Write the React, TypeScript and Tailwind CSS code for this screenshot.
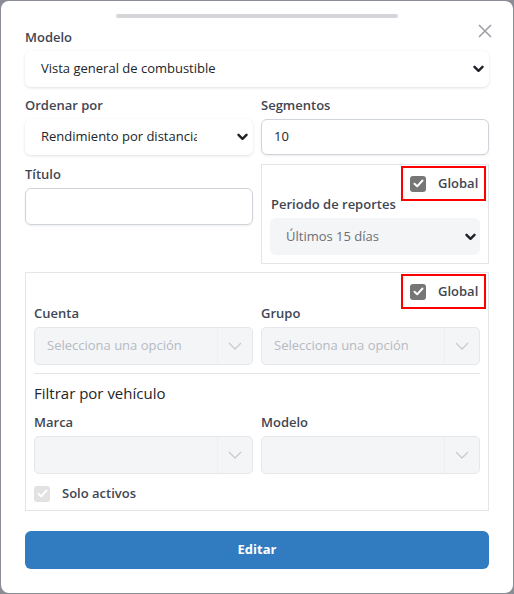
import React from 'react';

const font = { fontFamily: '"Open Sans", "Noto Sans", sans-serif' };

const BoldChevron = () => (
  <svg width="11" height="8" viewBox="0 0 11 8" className="shrink-0">
    <polyline points="1.5,1.8 5.5,5.8 9.5,1.8" fill="none" stroke="#1f2328" strokeWidth="2.4" strokeLinecap="round" strokeLinejoin="round" />
  </svg>
);

const ThinChevron = () => (
  <svg width="14" height="8" viewBox="0 0 14 8">
    <polyline points="1,1 7,7 13,1" fill="none" stroke="#c9cbd0" strokeWidth="1.3" />
  </svg>
);

const Check = ({ bg }: { bg: string }) => (
  <span className={`flex h-4 w-4 items-center justify-center rounded-[3px] ${bg}`}>
    <svg width="11" height="9" viewBox="0 0 11 9">
      <polyline points="1.5,4.8 4.2,7.3 9.5,1.5" fill="none" stroke="#fff" strokeWidth="2" strokeLinecap="round" strokeLinejoin="round" />
    </svg>
  </span>
);

const GlobalToggle = () => (
  <div className="flex justify-end">
    <div className="mr-[-6px] mt-[1px] flex h-[35px] w-[85px] items-center gap-3 border-2 border-[#ff0000] pl-[7px]">
      <Check bg="bg-[#767676]" />
      <span className="text-[13px] font-semibold text-[#3f4653]">Global</span>
    </div>
  </div>
);

const Label = ({ children }: { children: React.ReactNode }) => (
  <div className="mb-1 h-5 text-[13px] font-semibold leading-5 text-[#3f4653]">{children}</div>
);

const DisabledSelect = ({ placeholder }: { placeholder?: string }) => (
  <div className="flex h-[38px] items-stretch rounded-[5px] border border-[#e6e7ea] bg-[#f4f5f7]">
    <div className="flex flex-1 items-center pl-3 text-[13px] text-[#b6bac2]">{placeholder}</div>
    <div className="flex w-[35px] items-center justify-center border-l border-[#efeff2]">
      <ThinChevron />
    </div>
  </div>
);

export default function App() {
  return (
    <div className="h-[594px] w-[514px] bg-[#8a8d95] p-px" style={font}>
      <div className="relative h-[592px] w-[512px] rounded-lg bg-white px-6">
        {/* drag handle */}
        <div className="mx-auto h-[14px] pt-[13px]">
          <div className="mx-auto h-[4px] w-[282px] rounded-full bg-[#d4d6da]" />
        </div>
        <button className="absolute right-[20px] top-[22px] text-[#9ca0a6]">
          <svg width="16" height="16" viewBox="0 0 16 16">
            <path d="M2 2 L14 14 M14 2 L2 14" stroke="currentColor" strokeWidth="1.6" />
          </svg>
        </button>

        <div className="mt-[12px]">
          <Label>Modelo</Label>
          <div className="flex h-9 items-center justify-between rounded-md bg-white pl-4 pr-[5px] text-[13px] text-[#212529] shadow-[0_1px_3px_rgba(0,0,0,0.12)]">
            <span>Vista general de combustible</span>
            <BoldChevron />
          </div>
        </div>

        <div className="mt-2 grid grid-cols-2 gap-x-2">
          <div>
            <Label>Ordenar por</Label>
            <div className="flex h-9 items-center justify-between rounded-md bg-white pl-4 pr-[5px] text-[13px] text-[#212529] shadow-[0_1px_3px_rgba(0,0,0,0.12)]">
              <span className="w-[156px] overflow-hidden whitespace-nowrap">Rendimiento por distancia</span>
              <BoldChevron />
            </div>
          </div>
          <div>
            <Label>Segmentos</Label>
            <div className="flex h-9 items-center rounded-md border border-[#ced4da] px-3 text-[13px] text-[#212529] shadow-[0_1px_2px_rgba(0,0,0,0.08)]">
              10
            </div>
          </div>
        </div>

        <div className="mt-[9px] grid grid-cols-2 gap-x-2">
          <div>
            <Label>Título</Label>
            <div className="h-[37px] rounded-md border border-[#ced4da] shadow-[0_1px_2px_rgba(0,0,0,0.08)]" />
          </div>
          <div className="h-[100px] border border-[#e3e5e8] px-2">
            <GlobalToggle />
            <div className="mt-[-7px] h-5 pl-px text-[13px] font-semibold leading-5 text-[#3f4653]">Periodo de reportes</div>
            <div className="mt-[4px] flex h-[37px] items-center justify-between rounded-md bg-[#f4f5f7] pl-4 pr-[4px] text-[13px] text-[#6b6f76]">
              <span>Últimos 15 días</span>
              <BoldChevron />
            </div>
          </div>
        </div>

        <div className="mt-[8px] h-[239px] border border-[#e3e5e8] px-2">
          <GlobalToggle />
          <div className="mt-[-6px] grid grid-cols-2 gap-x-2">
            <div>
              <Label>Cuenta</Label>
              <DisabledSelect placeholder="Selecciona una opción" />
            </div>
            <div>
              <Label>Grupo</Label>
              <DisabledSelect placeholder="Selecciona una opción" />
            </div>
          </div>
          <div className="mt-[8px] h-px bg-[#e3e5e8]" />
          <div className="mt-[7px] h-6 text-[15px] leading-6 text-[#212529]">Filtrar por vehículo</div>
          <div className="mt-[7px] grid grid-cols-2 gap-x-2">
            <div>
              <Label>Marca</Label>
              <DisabledSelect />
            </div>
            <div>
              <Label>Modelo</Label>
              <DisabledSelect />
            </div>
          </div>
          <div className="mt-[10px] flex items-center gap-3">
            <Check bg="bg-[#e2e2e2]" />
            <span className="text-[13px] font-semibold text-[#3f4653]">Solo activos</span>
          </div>
        </div>

        <button className="mt-[20px] flex h-[38px] w-full items-center justify-center rounded-md bg-[#317bc1] text-[13px] font-bold text-white">
          Editar
        </button>
      </div>
    </div>
  );
}
